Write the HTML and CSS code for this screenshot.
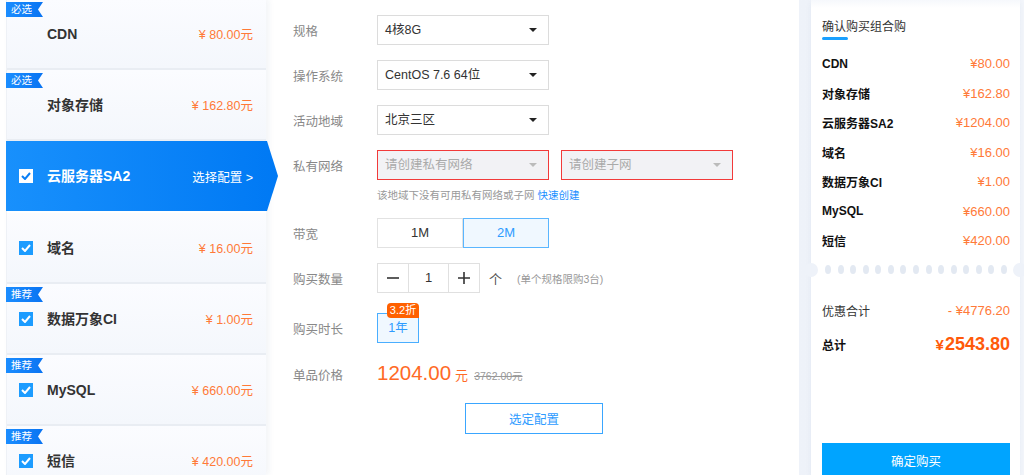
FILE: index.html
```html
<!DOCTYPE html>
<html lang="zh-CN">
<head>
    <meta charset="UTF-8">
    <title>组合购</title>
    <link rel="stylesheet" href="styles.css">
</head>
<body>
<div class="page">
    <aside class="products">
        <div class="product">
            <span class="tag">必选</span>
            <span class="name">CDN</span>
            <span class="price">¥ 80.00元</span>
        </div>
        <div class="product">
            <span class="tag">必选</span>
            <span class="name">对象存储</span>
            <span class="price">¥ 162.80元</span>
        </div>
        <div class="product active">
            <span class="check"><svg width="10" height="8" viewBox="0 0 10 8"><path d="M1 4l3 3 5-6" fill="none" stroke="currentColor" stroke-width="2"/></svg></span>
            <span class="name">云服务器SA2</span>
            <span class="more">选择配置 &gt;</span>
        </div>
        <div class="product">
            <span class="check"><svg width="10" height="8" viewBox="0 0 10 8"><path d="M1 4l3 3 5-6" fill="none" stroke="currentColor" stroke-width="2"/></svg></span>
            <span class="name">域名</span>
            <span class="price">¥ 16.00元</span>
        </div>
        <div class="product">
            <span class="tag">推荐</span>
            <span class="check"><svg width="10" height="8" viewBox="0 0 10 8"><path d="M1 4l3 3 5-6" fill="none" stroke="currentColor" stroke-width="2"/></svg></span>
            <span class="name">数据万象CI</span>
            <span class="price">¥ 1.00元</span>
        </div>
        <div class="product">
            <span class="tag">推荐</span>
            <span class="check"><svg width="10" height="8" viewBox="0 0 10 8"><path d="M1 4l3 3 5-6" fill="none" stroke="currentColor" stroke-width="2"/></svg></span>
            <span class="name">MySQL</span>
            <span class="price">¥ 660.00元</span>
        </div>
        <div class="product">
            <span class="tag">推荐</span>
            <span class="check"><svg width="10" height="8" viewBox="0 0 10 8"><path d="M1 4l3 3 5-6" fill="none" stroke="currentColor" stroke-width="2"/></svg></span>
            <span class="name">短信</span>
            <span class="price">¥ 420.00元</span>
        </div>
    </aside>

    <main class="config">
        <div class="row">
            <label class="label">规格</label>
            <div class="select">4核8G<i class="caret"></i></div>
        </div>
        <div class="row">
            <label class="label">操作系统</label>
            <div class="select">CentOS 7.6 64位<i class="caret"></i></div>
        </div>
        <div class="row">
            <label class="label">活动地域</label>
            <div class="select">北京三区<i class="caret"></i></div>
        </div>
        <div class="row">
            <label class="label">私有网络</label>
            <div class="select error">请创建私有网络<i class="caret"></i></div>
            <div class="select error">请创建子网<i class="caret"></i></div>
        </div>
        <p class="hint">该地域下没有可用私有网络或子网 <a href="#">快速创建</a></p>
        <div class="row row-bw">
            <label class="label">带宽</label>
            <div class="toggle">
                <span class="opt">1M</span>
                <span class="opt on">2M</span>
            </div>
        </div>
        <div class="row">
            <label class="label">购买数量</label>
            <div class="counter">
                <span class="step"><svg width="12" height="12" viewBox="0 0 12 12"><path d="M0 6h12" stroke="#333" stroke-width="1.6"/></svg></span>
                <span class="count">1</span>
                <span class="step"><svg width="12" height="12" viewBox="0 0 12 12"><path d="M0 6h12M6 0v12" stroke="#333" stroke-width="1.6"/></svg></span>
            </div>
            <span class="unit">个</span>
            <span class="limit">(单个规格限购3台)</span>
        </div>
        <div class="row row-time">
            <label class="label">购买时长</label>
            <span class="period">1年<em class="discount">3.2折</em></span>
        </div>
        <div class="row row-price">
            <label class="label">单品价格</label>
            <span class="amount">1204.00</span>
            <span class="yuan">元</span>
            <del class="old">3762.00元</del>
        </div>
        <button class="btn-pick">选定配置</button>
    </main>

    <aside class="summary">
        <div class="card">
            <h3 class="card-title">确认购买组合购</h3>
            <ul class="lines">
                <li><b>CDN</b><span>¥80.00</span></li>
                <li><b>对象存储</b><span>¥162.80</span></li>
                <li><b>云服务器SA2</b><span>¥1204.00</span></li>
                <li><b>域名</b><span>¥16.00</span></li>
                <li><b>数据万象CI</b><span>¥1.00</span></li>
                <li><b>MySQL</b><span>¥660.00</span></li>
                <li><b>短信</b><span>¥420.00</span></li>
            </ul>
            <div class="perforation">
                <i></i><i></i><i></i><i></i><i></i><i></i><i></i><i></i><i></i><i></i><i></i><i></i><i></i><i></i><i></i>
            </div>
            <div class="total-row">
                <span>优惠合计</span>
                <span class="minus">- ¥4776.20</span>
            </div>
            <div class="total-row grand">
                <b>总计</b>
                <span class="sum"><small>¥</small>2543.80</span>
            </div>
            <button class="btn-buy">确定购买</button>
        </div>
    </aside>
</div>
</body>
</html>
```

FILE: styles.css
```css
* {
    box-sizing: border-box;
    margin: 0;
    padding: 0;
}

body {
    font-family: "Liberation Sans", "Noto Sans CJK SC", sans-serif;
    background: #fff;
    color: #333;
    overflow: hidden;
}

.page {
    display: flex;
    height: 475px;
}

/* left product list */

.products {
    width: 260px;
    margin-left: 6px;
    margin-top: -1px;
    display: flex;
    flex-direction: column;
    box-shadow: 3px 0 6px rgba(30, 60, 120, 0.06);
    border-left: 1px solid #eef1f6;
    position: relative;
    z-index: 1;
}

.product {
    position: relative;
    flex: none;
    height: 71px;
    display: flex;
    align-items: center;
    padding: 0 13px 0 12px;
    background: linear-gradient(180deg, #fbfcff, #f4f7fc);
    border-bottom: 2px solid #e9edf3;
}

.product .name {
    margin-left: 28px;
    font-size: 14px;
    font-weight: bold;
    color: #333;
    line-height: 20px;
}

.product .check + .name {
    margin-left: 14px;
}

.product .price {
    margin-left: auto;
    font-size: 12.5px;
    color: #ff7a38;
}

.check {
    width: 14px;
    height: 14px;
    display: flex;
    align-items: center;
    justify-content: center;
    background: #1c9cff;
    color: #fff;
}

.tag {
    position: absolute;
    left: -1px;
    top: 3px;
    width: 37px;
    height: 15px;
    padding-left: 5px;
    font-size: 10.5px;
    line-height: 15px;
    color: #fff;
    background: linear-gradient(90deg, #1b8dff, #0a74f2);
    clip-path: polygon(0 0, 100% 0, calc(100% - 5px) 50%, 100% 100%, 0 100%);
}

.product.active {
    height: 70px;
    margin: 0 -12px 2px -1px;
    padding-left: 13px;
    padding-right: 25px;
    border-bottom: 0;
    background: linear-gradient(90deg, #1890fc, #0079f4);
    clip-path: polygon(0 0, calc(100% - 11px) 0, 100% 50%, calc(100% - 11px) 100%, 0 100%);
}

.product.active .check {
    background: #fff;
    color: #0a7ff5;
}

.product.active .name {
    color: #fff;
}

.product.active .more {
    margin-left: auto;
    font-size: 12.5px;
    color: #fff;
}

/* middle config form */

.config {
    flex: 1;
    padding: 15px 0 0 27px;
}

.row {
    display: flex;
    align-items: center;
    height: 30px;
    margin-bottom: 15px;
}

.label {
    width: 84px;
    flex: none;
    font-size: 12.5px;
    color: #888;
}

.select {
    position: relative;
    width: 172px;
    height: 30px;
    margin-right: 12px;
    padding: 0 7px;
    border: 1px solid #dcdcdc;
    font-size: 12.5px;
    line-height: 28px;
    color: #333;
}

.caret {
    position: absolute;
    right: 11px;
    top: 12px;
    border-left: 4px solid transparent;
    border-right: 4px solid transparent;
    border-top: 4px solid #222;
}

.select.error {
    background: #f2f2f5;
    border-color: #f23a3a;
    color: #aaa;
}

.select.error .caret {
    border-top-color: #bbb;
}

.hint {
    margin: -7px 0 0 84px;
    font-size: 10.5px;
    line-height: 14px;
    color: #999;
}

.hint a {
    color: #1a8fff;
    text-decoration: none;
}

.row-bw {
    margin-top: 16px;
}

.toggle {
    display: flex;
}

.opt {
    width: 86px;
    height: 30px;
    border: 1px solid #e2e2e2;
    text-align: center;
    font-size: 13px;
    line-height: 28px;
    color: #333;
}

.opt.on {
    border-color: #5ab6ff;
    background: #f0f8ff;
    color: #2d9bff;
}

.counter {
    display: flex;
    height: 30px;
    border: 1px solid #e0e0e0;
}

.step {
    width: 30px;
    display: flex;
    align-items: center;
    justify-content: center;
}

.count {
    width: 41px;
    border-left: 1px solid #e0e0e0;
    border-right: 1px solid #e0e0e0;
    text-align: center;
    font-size: 13px;
    line-height: 28px;
    color: #333;
}

.unit {
    margin-left: 9px;
    font-size: 13px;
    color: #555;
}

.limit {
    margin-left: 15px;
    font-size: 10.5px;
    color: #999;
}

.row-time {
    margin-top: 20px;
}

.period {
    position: relative;
    width: 42px;
    height: 30px;
    border: 1px solid #4aaeff;
    background: #f0f8ff;
    text-align: center;
    font-size: 12.5px;
    line-height: 28px;
    color: #2d9bff;
}

.discount {
    position: absolute;
    left: 9px;
    top: -11px;
    width: 32px;
    height: 15px;
    border-radius: 4px 4px 0 4px;
    background: #ff6000;
    color: #fff;
    font-style: normal;
    font-size: 11px;
    line-height: 15px;
}

.row-price {
    margin-top: 1px;
    align-items: baseline;
    height: 30px;
    line-height: 30px;
}

.amount {
    font-size: 20.5px;
    color: #ff6a26;
}

.yuan {
    margin-left: 4px;
    font-size: 13px;
    color: #ff6a26;
}

.old {
    margin-left: 6px;
    font-size: 10.5px;
    color: #999;
}

.btn-pick {
    display: block;
    width: 138px;
    height: 31px;
    margin: 3px 0 0 172px;
    border: 1px solid #3aa6ff;
    background: #fff;
    font-family: inherit;
    font-size: 12.5px;
    color: #2d9bff;
}

/* right summary */

.summary {
    width: 225px;
    flex: none;
    padding: 0 4px 0 12px;
    background: linear-gradient(90deg, #eef2f9, #f3f6fb);
}

.card {
    position: relative;
    height: 100%;
    padding: 18px 10px 0 11px;
    background: linear-gradient(180deg, #f6f8fc, #fff 8px);
    box-shadow: 0 2px 6px rgba(30, 60, 120, 0.06);
}

.card-title {
    font-size: 12px;
    font-weight: normal;
    line-height: 18px;
    color: #333;
}

.card-title::after {
    content: "";
    display: block;
    width: 26px;
    height: 3px;
    margin-top: 1px;
    border-radius: 2px;
    background: #1aa0ff;
}

.lines {
    list-style: none;
    margin-top: 9px;
}

.lines li,
.total-row {
    display: flex;
    justify-content: space-between;
    align-items: center;
    height: 29.5px;
    font-size: 12px;
}

.lines b,
.total-row b {
    color: #111;
}

.lines span,
.total-row .minus {
    font-size: 13px;
    color: #ff7a38;
}

.perforation {
    position: relative;
    height: 20px;
    margin: 4px 0 0;
    padding: 0 3px;
    display: flex;
    justify-content: space-between;
    align-items: center;
}

.perforation i {
    width: 6px;
    height: 9px;
    border-radius: 50%;
    background: #e3e9f2;
}

.perforation::before,
.perforation::after {
    content: "";
    position: absolute;
    top: 3px;
    width: 14px;
    height: 14px;
    border-radius: 50%;
    background: #eef2f9;
}

.perforation::before {
    left: -18px;
}

.perforation::after {
    right: -17px;
}

.total-row {
    margin-top: 16px;
    height: 30px;
    color: #333;
}

.total-row.grand {
    margin-top: 4px;
}

.sum {
    font-size: 18px;
    font-weight: bold;
    color: #ff5a0a;
}

.sum small {
    font-size: 15px;
    margin-right: 1px;
}

.btn-buy {
    display: block;
    width: 100%;
    height: 36px;
    margin-top: 83px;
    border: 0;
    background: #00a4ff;
    font-family: inherit;
    font-size: 12.5px;
    color: #fff;
}
```
